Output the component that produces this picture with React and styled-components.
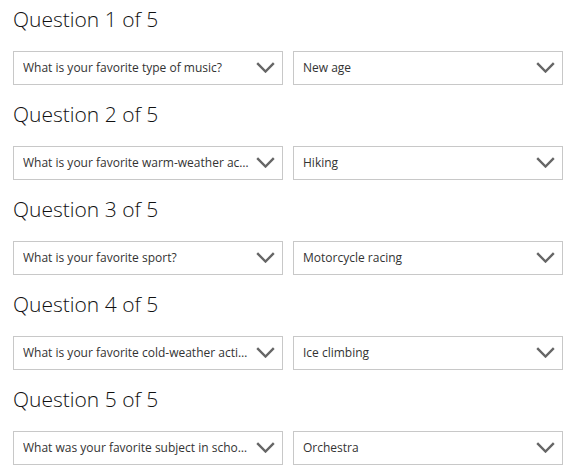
import React from 'react'
import styled, { createGlobalStyle } from 'styled-components'

const GlobalStyle = createGlobalStyle`
  body {
    margin: 0;
    background: #fff;
    font-family: "Open Sans", "Liberation Sans", sans-serif;
    color: #222;
  }
`

const questions = [
  { q: 'What is your favorite type of music?', a: 'New age' },
  { q: 'What is your favorite warm-weather activity?', a: 'Hiking' },
  { q: 'What is your favorite sport?', a: 'Motorcycle racing' },
  { q: 'What is your favorite cold-weather activity?', a: 'Ice climbing' },
  { q: 'What was your favorite subject in school?', a: 'Orchestra' },
]

const Chevron = () => (
  <ChevronSvg viewBox="0 0 19 11" width="19" height="11">
    <polyline points="1.2,1.2 9.5,9.5 17.8,1.2" />
  </ChevronSvg>
)

const App = () => {
  return (
    <>
      <GlobalStyle />
      <Page>
        {questions.map((item, i) => (
          <Section key={i}>
            <Heading>Question {i + 1} of {questions.length}</Heading>
            <Row>
              <Select>
                <Value>{item.q}</Value>
                <Chevron />
              </Select>
              <Select>
                <Value>{item.a}</Value>
                <Chevron />
              </Select>
            </Row>
          </Section>
        ))}
      </Page>
    </>
  )
}

export default App

const Page = styled.div`
  padding: 4px 13px 0;
  display: flex;
  flex-direction: column;
  gap: 14px;
`

const Section = styled.section`
  display: flex;
  flex-direction: column;
  gap: 17px;
`

const Heading = styled.h2`
  margin: 0;
  font-size: 21px;
  line-height: 30px;
  font-weight: 300;
  color: #111;
`

const Row = styled.div`
  display: grid;
  grid-template-columns: 1fr 1fr;
  column-gap: 10px;
`

const Select = styled.div`
  box-sizing: border-box;
  height: 34px;
  border: 1px solid #c8c8c8;
  background: #fff;
  display: flex;
  align-items: center;
  gap: 7px;
  padding: 0 7px 1px 9px;
  min-width: 0;
`

const Value = styled.span`
  flex: 1;
  min-width: 0;
  font-size: 12px;
  color: #333;
  white-space: nowrap;
  overflow: hidden;
  text-overflow: ellipsis;
`

const ChevronSvg = styled.svg`
  flex-shrink: 0;
  fill: none;
  stroke: #666;
  stroke-width: 2.4;
`
